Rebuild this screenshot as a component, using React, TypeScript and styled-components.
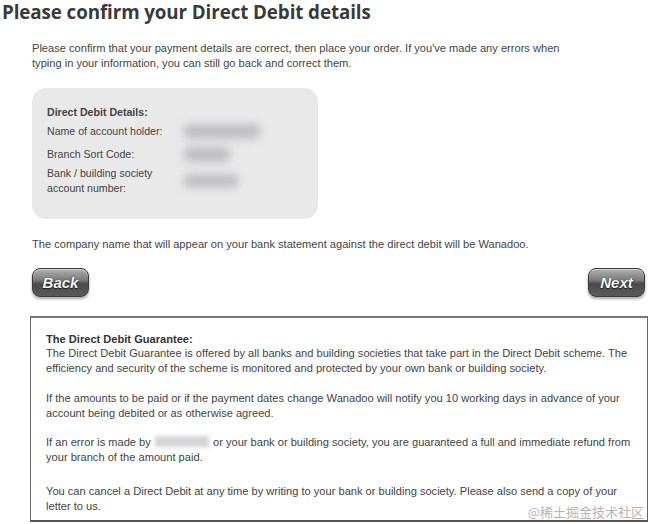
import React from "react";
import styled, { createGlobalStyle } from "styled-components";

const Global = createGlobalStyle`
  html, body { margin: 0; padding: 0; background: #fff; }
  body { font-family: "Liberation Sans", Arial, sans-serif; color: #3d3d3d; }
`;

const Page = styled.div`
  position: relative;
  width: 650px;
  height: 524px;
  overflow: hidden;
  background: #fff;
`;

const Title = styled.h1`
  margin: 0;
  padding: 0 0 0 2px;
  font-family: "Open Sans", "DejaVu Sans", sans-serif;
  font-weight: 700;
  font-size: 18.8px;
  line-height: 24px;
  color: #3a3a3a;
  letter-spacing: -0.1px;
`;

const Content = styled.div`
  padding: 17px 0 0 32px;
  display: flex;
  flex-direction: column;
`;

const Intro = styled.p`
  margin: 0;
  width: 545px;
  font-size: 11.1px;
  line-height: 15px;
  color: #444;
`;

const DetailsCard = styled.div`
  margin-top: 17px;
  width: 286px;
  height: 131px;
  box-sizing: border-box;
  background: #e9e9ea;
  border-radius: 14px;
  padding: 17px 0 0 15px;
  font-size: 10.6px;
  color: #444;
`;

const CardTitle = styled.div`
  font-weight: 700;
  line-height: 14px;
  margin-bottom: 1px;
`;

const DetailRow = styled.div`
  display: grid;
  grid-template-columns: 136px 1fr;
  align-items: center;
  min-height: 23px;
  line-height: 15px;
`;

const Blur = styled.span<{ $w: number; $h: number }>`
  display: block;
  width: ${(p) => p.$w}px;
  height: ${(p) => p.$h}px;
  background: #b5b5b7;
  border-radius: 8px;
  filter: blur(4px);
  opacity: 0.8;
`;

const Company = styled.p`
  margin: 18px 0 0;
  font-size: 11.1px;
  line-height: 15px;
  color: #444;
`;

const ButtonBar = styled.div`
  display: flex;
  justify-content: space-between;
  margin-top: 16px;
  padding-right: 5px;
`;

const GlossButton = styled.button`
  width: 57px;
  height: 29px;
  border: 1px solid #3a3a3a;
  border-radius: 8px;
  background: linear-gradient(#b0b0b0 0%, #7a7a7a 42%, #4a4a4a 55%, #5a5a5a 100%);
  box-shadow: 0 2px 3px rgba(0, 0, 0, 0.35), inset 0 1px 0 rgba(255, 255, 255, 0.5);
  color: #f4f4f4;
  font-family: "Liberation Sans", Arial, sans-serif;
  font-style: italic;
  font-weight: 700;
  font-size: 15px;
  text-shadow: 0 0 1px #222, 0 1px 1px #222;
  padding: 0;
  cursor: pointer;
`;

const Guarantee = styled.div`
  margin: 19px 0 0 -2px;
  width: 618px;
  height: 206px;
  box-sizing: border-box;
  border: 1px solid #666;
  border-top: 2px solid #777;
  border-bottom: 2px solid #555;
  padding: 15px 12px 0 15px;
  font-size: 11.1px;
  line-height: 15px;
  color: #444;
`;

const GuaranteePara = styled.p<{ $gap?: number }>`
  margin: 0 0 ${(p) => p.$gap ?? 15}px;
`;

const Strong = styled.strong`
  display: block;
  font-weight: 700;
  line-height: 13px;
  color: #333;
`;

const InlineBlur = styled.span`
  display: inline-block;
  width: 54px;
  height: 11px;
  vertical-align: -1px;
  background: #d4d4d6;
  filter: blur(2px);
  margin: 0 1px;
`;

const Watermark = styled.div`
  position: absolute;
  right: 6px;
  bottom: 3px;
  font-family: "Noto Sans CJK SC", sans-serif;
  font-size: 13px;
  color: rgba(170, 170, 170, 0.9);
  pointer-events: none;
`;

export default function App() {
  return (
    <Page>
      <Global />
      <Title>Please confirm your Direct Debit details</Title>
      <Content>
        <Intro>
          Please confirm that your payment details are correct, then place your order. If you've made any errors when
          typing in your information, you can still go back and correct them.
        </Intro>
        <DetailsCard>
          <CardTitle>Direct Debit Details:</CardTitle>
          <DetailRow>
            <span>Name of account holder:</span>
            <Blur $w={78} $h={15} />
          </DetailRow>
          <DetailRow>
            <span>Branch Sort Code:</span>
            <Blur $w={48} $h={15} />
          </DetailRow>
          <DetailRow>
            <span>
              Bank / building society
              <br />
              account number:
            </span>
            <Blur $w={56} $h={14} />
          </DetailRow>
        </DetailsCard>
        <Company>
          The company name that will appear on your bank statement against the direct debit will be Wanadoo.
        </Company>
        <ButtonBar>
          <GlossButton>Back</GlossButton>
          <GlossButton>Next</GlossButton>
        </ButtonBar>
        <Guarantee>
          <GuaranteePara>
            <Strong>The Direct Debit Guarantee:</Strong>
            The Direct Debit Guarantee is offered by all banks and building societies that take part in the Direct Debit
            scheme. The efficiency and security of the scheme is monitored and protected by your own bank or building
            society.
          </GuaranteePara>
          <GuaranteePara $gap={14}>
            If the amounts to be paid or if the payment dates change Wanadoo will notify you 10 working days in advance
            of your account being debited or as otherwise agreed.
          </GuaranteePara>
          <GuaranteePara $gap={19}>
            If an error is made by <InlineBlur /> or your bank or building society, you are guaranteed a full and
            immediate refund from your branch of the amount paid.
          </GuaranteePara>
          <GuaranteePara $gap={0}>
            You can cancel a Direct Debit at any time by writing to your bank or building society. Please also send a
            copy of your letter to us.
          </GuaranteePara>
        </Guarantee>
      </Content>
      <Watermark>@稀土掘金技术社区</Watermark>
    </Page>
  );
}
